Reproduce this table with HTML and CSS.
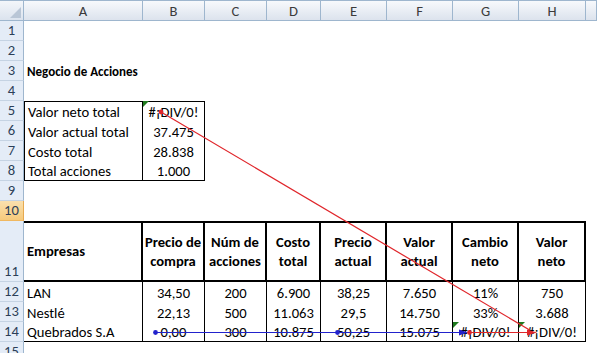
FILE: index.html
```html
<!DOCTYPE html>
<html lang="es">
<head>
<meta charset="utf-8">
<title>Negocio de Acciones</title>
<link rel="stylesheet" href="styles.css">
</head>
<body>
<div class="sheet">
  <div class="grid">
    <div class="corner"></div>
    <div class="ch">A</div><div class="ch">B</div><div class="ch">C</div><div class="ch">D</div>
    <div class="ch">E</div><div class="ch">F</div><div class="ch">G</div><div class="ch">H</div><div class="ch"></div>

    <div class="rh">1</div><div class="c rest"></div>
    <div class="rh">2</div><div class="c rest"></div>
    <div class="rh">3</div><div class="c rest title">Negocio de Acciones</div>
    <div class="rh">4</div><div class="c rest"></div>

    <div class="rh">5</div><div class="c bl br bt">Valor neto total</div><div class="c ctr br bt">#¡DIV/0!</div><div class="c rest2"></div>
    <div class="rh">6</div><div class="c bl br">Valor actual total</div><div class="c ctr br">37.475</div><div class="c rest2"></div>
    <div class="rh">7</div><div class="c bl br">Costo total</div><div class="c ctr br">28.838</div><div class="c rest2"></div>
    <div class="rh">8</div><div class="c bl br bb">Total acciones</div><div class="c ctr br bb">1.000</div><div class="c rest2"></div>

    <div class="rh">9</div><div class="c rest"></div>
    <div class="rh sel">10</div><div class="c rest"></div>

    <div class="rh">11</div>
    <div class="c hd left">Empresas</div>
    <div class="c hd">Precio de<br>compra</div>
    <div class="c hd">Núm de<br>acciones</div>
    <div class="c hd">Costo<br>total</div>
    <div class="c hd">Precio<br>actual</div>
    <div class="c hd">Valor<br>actual</div>
    <div class="c hd">Cambio<br>neto</div>
    <div class="c hd">Valor<br>neto</div>
    <div class="c"></div>

    <div class="rh">12</div>
    <div class="c br">LAN</div><div class="c ctr br">34,50</div><div class="c ctr br">200</div><div class="c ctr br">6.900</div>
    <div class="c ctr br">38,25</div><div class="c ctr br">7.650</div><div class="c ctr br">11%</div><div class="c ctr br">750</div><div class="c"></div>

    <div class="rh">13</div>
    <div class="c br">Nestlé</div><div class="c ctr br">22,13</div><div class="c ctr br">500</div><div class="c ctr br">11.063</div>
    <div class="c ctr br">29,5</div><div class="c ctr br">14.750</div><div class="c ctr br">33%</div><div class="c ctr br">3.688</div><div class="c"></div>

    <div class="rh">14</div>
    <div class="c br bb">Quebrados S.A</div><div class="c ctr br bb">0,00</div><div class="c ctr br bb">300</div><div class="c ctr br bb">10.875</div>
    <div class="c ctr br bb">50,25</div><div class="c ctr br bb">15.075</div><div class="c ctr br bb">#¡DIV/0!</div><div class="c ctr br bb">#¡DIV/0!</div><div class="c"></div>

    <div class="rh">15</div><div class="c rest"></div>
  </div>

  <svg class="audit" width="597" height="353" viewBox="0 0 597 353" aria-hidden="true">
    <polygon points="143,101 149,101 143,107" fill="#1f7a1f"/>
    <polygon points="453,322 459,322 453,328" fill="#1f7a1f"/>
    <polygon points="519,322 525,322 519,328" fill="#1f7a1f"/>
    <line x1="155" y1="332.5" x2="462" y2="332.5" stroke="#2222cc" stroke-width="1.2"/>
    <circle cx="155.5" cy="332.5" r="2.4" fill="#2222cc"/>
    <circle cx="337.5" cy="332.5" r="2.4" fill="#2222cc"/>
    <polygon points="459,329.5 468,332.5 459,335.5" fill="#2222cc"/>
    <line x1="161" y1="112" x2="530" y2="330.2" stroke="#e0262b" stroke-width="1.2"/>
    <circle cx="161" cy="112" r="2.4" fill="#e0262b"/>
    <line x1="469" y1="332.5" x2="530" y2="332.5" stroke="#e0262b" stroke-width="1.2"/>
    <circle cx="469.5" cy="332.5" r="2.4" fill="#e0262b"/>
    <polygon points="527,329.5 537,332.5 527,335.5" fill="#e0262b"/>
  </svg>
</div>
</body>
</html>
```

FILE: styles.css
```css
* {
  box-sizing: border-box;
}

body {
  margin: 0;
  background: #ffffff;
  font-family: Carlito, Calibri, Lato, "Liberation Sans", sans-serif;
}

.sheet {
  position: relative;
  width: 597px;
  height: 353px;
  overflow: hidden;
  background: #ffffff;
}

.grid {
  display: grid;
  grid-template-columns: 24px 119px 62px 62px 54px 66px 66px 66px 67px 11px;
  grid-template-rows: 21px repeat(10, 20px) 61px repeat(4, 20px);
  font-size: 14.6px;
  color: #000000;
}

.corner {
  position: relative;
  background: linear-gradient(#f3f6fa, #dbe3ee);
  border-top: 1px solid #9eb6ce;
  border-right: 1px solid #9eb6ce;
  border-bottom: 1px solid #9eb6ce;
}

.corner::after {
  content: "";
  position: absolute;
  right: 2px;
  bottom: 2px;
  width: 11px;
  height: 11px;
  background: #b9c6d6;
  clip-path: polygon(100% 0, 100% 100%, 0 100%);
}

.ch {
  display: flex;
  align-items: center;
  justify-content: center;
  background: linear-gradient(#f7f9fc, #dce3ed);
  border-top: 1px solid #9eb6ce;
  border-right: 1px solid #9eb6ce;
  border-bottom: 1px solid #9eb6ce;
  color: #3b3b3b;
  font-size: 14.6px;
  padding-top: 1px;
}

.rh {
  display: flex;
  align-items: flex-end;
  justify-content: center;
  background: #e4ecf7;
  border-right: 1px solid #9eb6ce;
  border-bottom: 1px solid #c5d3e3;
  color: #2c3f58;
  font-size: 14.6px;
  line-height: 17px;
  padding-bottom: 1px;
}

.rh.sel {
  background: linear-gradient(#fae0ae, #f6ca7c);
  border-bottom-color: #f0b861;
  border-right-color: #e6a94f;
}

.c {
  display: flex;
  align-items: flex-end;
  padding: 0 3px;
  line-height: 17px;
  white-space: nowrap;
  min-width: 0;
}

.ctr {
  justify-content: center;
}

.rest {
  grid-column: 2 / -1;
}

.rest2 {
  grid-column: 4 / -1;
}

.title {
  font-weight: bold;
  font-size: 13px;
  padding-bottom: 1px;
}

.bl { border-left: 1px solid #000000; }
.br { border-right: 1px solid #000000; }
.bt { border-top: 1px solid #000000; }
.bb { border-bottom: 1px solid #000000; }

.hd {
  align-items: center;
  justify-content: center;
  text-align: center;
  font-weight: bold;
  line-height: 19px;
  border-top: 2px solid #000000;
  border-bottom: 2px solid #000000;
  border-right: 2px solid #000000;
  padding: 0;
}

.hd.left {
  justify-content: flex-start;
  text-align: left;
  padding-left: 3px;
}

.audit {
  position: absolute;
  left: 0;
  top: 0;
  pointer-events: none;
}
```
